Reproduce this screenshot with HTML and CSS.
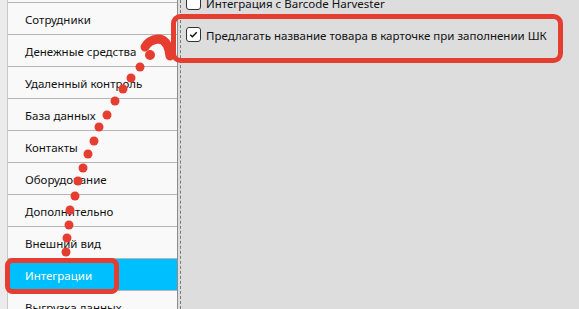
FILE: index.html
```html
<!DOCTYPE html>
<html>
<head>
<meta charset="utf-8">
<link rel="stylesheet" href="styles.css">
</head>
<body>
<div class="app">
  <div class="strip"></div>
  <nav class="nav">
    <div class="nav-top"></div>
    <div class="nav-item">Сотрудники</div>
    <div class="nav-item">Денежные средства</div>
    <div class="nav-item">Удаленный контроль</div>
    <div class="nav-item">База данных</div>
    <div class="nav-item">Контакты</div>
    <div class="nav-item">Оборудование</div>
    <div class="nav-item">Дополнительно</div>
    <div class="nav-item">Внешний вид</div>
    <div class="nav-item active">Интеграции</div>
    <div class="nav-item">Выгрузка данных</div>
  </nav>
  <div class="splitter"></div>
  <main class="content">
    <label class="check-row first">
      <span class="box"></span>
      <span class="label">Интеграция с Barcode Harvester</span>
    </label>
    <label class="check-row">
      <span class="box checked">
        <svg viewBox="0 0 14 14" width="14" height="14"><path d="M3.5 7.2 L5.8 9.4 L10.5 4.6" fill="none" stroke="#111" stroke-width="1.6"/></svg>
      </span>
      <span class="label">Предлагать название товара в карточке при заполнении ШК</span>
    </label>
  </main>
</div>
<svg class="annot" width="579" height="309" viewBox="0 0 579 309">
  <g fill="none" stroke="#e53d30" stroke-linejoin="round">
    <rect x="173.5" y="16.5" width="387" height="44" rx="7" stroke-width="5"/>
    <rect x="7.5" y="260.5" width="109" height="31" rx="5" stroke-width="5"/>
    <path d="M145 47 Q149 40 158 39 Q168 39 170 56" stroke-width="9" stroke-linecap="round"/>
  </g>
  <g fill="#e53d30">
    <circle cx="150" cy="55" r="5"/>
    <circle cx="140" cy="67" r="4.5"/>
    <circle cx="131" cy="78" r="4.5"/>
    <circle cx="123" cy="89" r="4.5"/>
    <circle cx="115" cy="101" r="4.5"/>
    <circle cx="107" cy="115" r="4.5"/>
    <circle cx="99" cy="127" r="4.5"/>
    <circle cx="94" cy="141" r="4.5"/>
    <circle cx="88" cy="154" r="4.5"/>
    <circle cx="83" cy="168" r="4.5"/>
    <circle cx="78" cy="181" r="4.5"/>
    <circle cx="75" cy="196" r="4.5"/>
    <circle cx="70" cy="210" r="4.5"/>
    <circle cx="69" cy="225" r="4.5"/>
    <circle cx="67" cy="238" r="4.5"/>
    <circle cx="66" cy="252" r="4.5"/>
  </g>
</svg>
</body>
</html>
```
FILE: styles.css
```css
html, body {
  margin: 0;
  padding: 0;
}
body {
  width: 579px;
  height: 309px;
  overflow: hidden;
  background: #dddddd;
  font-family: "Noto Sans", "Open Sans", sans-serif;
  font-size: 11.5px;
  color: #111;
  position: relative;
}
.app {
  display: flex;
  height: 309px;
}
.strip {
  width: 7px;
  background: #ebebeb;
  border-right: 1px solid #c9c9c9;
}
.nav {
  width: 169px;
  background: #f9f9f9;
  border-right: 1px solid #8c8c8c;
  overflow: hidden;
}
.nav-top {
  height: 2px;
  border-bottom: 1px solid #b5b5b5;
}
.nav-item {
  height: 31px;
  line-height: 33px;
  border-bottom: 1px solid #b5b5b5;
  padding-left: 17px;
  white-space: nowrap;
}
.nav-item.active {
  background: #00bfff;
  color: #fff;
}
.splitter {
  width: 2px;
  border-right: 1px dashed #7a7a7a;
}
.content {
  flex: 1;
  padding-left: 5px;
  margin-top: -5px;
  display: flex;
  flex-direction: column;
  gap: 17px;
}
.check-row {
  display: flex;
  align-items: center;
  gap: 5px;
  height: 15px;
}
.label {
  white-space: nowrap;
  padding-top: 1px;
}
.box {
  width: 13px;
  height: 13px;
  border: 1px solid #333;
  border-radius: 3px;
  background: #fff;
  display: flex;
  flex: none;
}
.box svg {
  width: 13px;
  height: 13px;
}
.annot {
  position: absolute;
  left: 0;
  top: 0;
  pointer-events: none;
}
```
